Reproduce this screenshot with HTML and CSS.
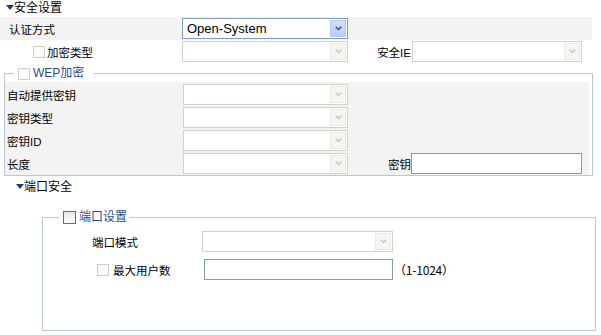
FILE: index.html
```html
<!DOCTYPE html>
<html lang="zh-CN">

<head>
    <meta charset="UTF-8">
    <title>安全设置</title>
    <link rel="stylesheet" href="styles.css">
</head>

<body>

    <!-- 安全设置 -->
    <div class="head"><span class="tri"></span>安全设置</div>

    <div class="row shade">
        <label class="lab lab-top">认证方式</label>
        <div class="sel on w166">
            <span class="val">Open-System</span>
            <span class="btn"><svg width="7" height="5" viewBox="0 0 7 5"><polyline points="0.8,0.8 3.5,3.6 6.2,0.8" /></svg></span>
        </div>
    </div>

    <div class="row">
        <label class="lab lab-cb"><span class="cb"></span>加密类型</label>
        <div class="sel w166">
            <span class="btn"><svg width="7" height="5" viewBox="0 0 7 5"><polyline points="0.8,0.8 3.5,3.6 6.2,0.8" /></svg></span>
        </div>
        <label class="lab-r">安全IE</label>
        <div class="sel w170 gap1">
            <span class="btn"><svg width="7" height="5" viewBox="0 0 7 5"><polyline points="0.8,0.8 3.5,3.6 6.2,0.8" /></svg></span>
        </div>
    </div>

    <fieldset class="wep">
        <legend><span class="cb"></span>WEP加密</legend>
        <div class="wep-body">
            <div class="row">
                <label class="lab lab-in">自动提供密钥</label>
                <div class="sel w165">
                    <span class="btn"><svg width="7" height="5" viewBox="0 0 7 5"><polyline points="0.8,0.8 3.5,3.6 6.2,0.8" /></svg></span>
                </div>
            </div>
            <div class="row">
                <label class="lab lab-in">密钥类型</label>
                <div class="sel w165">
                    <span class="btn"><svg width="7" height="5" viewBox="0 0 7 5"><polyline points="0.8,0.8 3.5,3.6 6.2,0.8" /></svg></span>
                </div>
            </div>
            <div class="row">
                <label class="lab lab-in">密钥ID</label>
                <div class="sel w165">
                    <span class="btn"><svg width="7" height="5" viewBox="0 0 7 5"><polyline points="0.8,0.8 3.5,3.6 6.2,0.8" /></svg></span>
                </div>
            </div>
            <div class="row">
                <label class="lab lab-in">长度</label>
                <div class="sel w165">
                    <span class="btn"><svg width="7" height="5" viewBox="0 0 7 5"><polyline points="0.8,0.8 3.5,3.6 6.2,0.8" /></svg></span>
                </div>
                <label class="lab-r">密钥</label>
                <input type="text" class="txt w171">
            </div>
        </div>
    </fieldset>

    <!-- 端口安全 -->
    <div class="head head2"><span class="tri"></span>端口安全</div>

    <fieldset class="port">
        <legend><span class="cb cb-on"></span>端口设置</legend>
        <div class="row row-port">
            <label class="lab lab-mode">端口模式</label>
            <div class="sel w191">
                <span class="btn"><svg width="7" height="5" viewBox="0 0 7 5"><polyline points="0.8,0.8 3.5,3.6 6.2,0.8" /></svg></span>
            </div>
        </div>
        <div class="row row-port">
            <label class="lab lab-max"><span class="cb"></span>最大用户数</label>
            <input type="text" class="txt w189">
            <span class="range">（1-1024）</span>
        </div>
    </fieldset>

</body>

</html>
```

FILE: styles.css
```css
* {
    margin: 0;
    padding: 0;
    box-sizing: border-box;
}

body {
    font-family: "Liberation Sans", "Noto Sans CJK SC", sans-serif;
    font-size: 11.5px;
    color: #000;
    background: #fff;
    width: 601px;
}

.head {
    height: 17px;
    line-height: 17px;
    padding-left: 6px;
    display: flex;
    align-items: center;
    font-size: 12px;
}

.head2 {
    height: 21px;
    padding-left: 16px;
    margin-top: 1px;
}

.tri {
    width: 0;
    height: 0;
    border-left: 4px solid transparent;
    border-right: 4px solid transparent;
    border-top: 5px solid #1d3a78;
    margin-top: -2px;
}

.row {
    height: 23px;
    display: flex;
    align-items: center;
}

.shade {
    background: #f3f3f3;
    width: 592px;
}

.lab {
    display: flex;
    align-items: center;
    height: 100%;
}

.lab-top {
    width: 182px;
    padding-left: 9px;
}

.lab-cb {
    width: 182px;
    padding-left: 33px;
}

.lab-in {
    width: 178px;
    padding-left: 2px;
}

.lab-r {
    width: 63px;
    text-align: right;
}

.cb {
    display: inline-block;
    width: 12px;
    height: 12px;
    border: 1px solid #cfcdc4;
    background: #fbfbfa;
    margin-right: 2px;
}

.cb-on {
    width: 13px;
    height: 13px;
    border-color: #52709f;
    background: linear-gradient(#e6e6e0, #fff);
    margin-right: 3px;
}

/* fake select boxes */
.sel {
    height: 21px;
    border: 1px solid #d3d1c6;
    background: #fff;
    display: flex;
    align-items: center;
    justify-content: space-between;
    padding: 1px;
}

.sel .btn {
    margin-left: auto;
    width: 16px;
    height: 17px;
    background: #f6f5f0;
    border: 1px solid #ebe9e0;
    display: flex;
    align-items: center;
    justify-content: center;
}

.sel .btn polyline {
    fill: none;
    stroke: #c6c4ba;
    stroke-width: 1.4;
}

.sel.on {
    border-color: #7f9db9;
}

.sel.on .btn {
    background: linear-gradient(#d2defa, #b9cdf6);
    border-color: #b4c7f1;
}

.sel.on .btn polyline {
    stroke: #4c5f86;
    stroke-width: 1.7;
}

.val {
    font-size: 13px;
    padding-left: 3px;
}

.w166 { width: 166px; }
.w165 { width: 165px; }
.w170 { width: 170px; }
.w191 { width: 191px; }
.gap1 { margin-left: 1px; }

.txt {
    height: 21px;
    border: 1px solid #7f9db9;
    background: #fff;
    outline: none;
}

.w171 { width: 171px; }
.w189 { width: 189px; }

/* WEP box */
.wep {
    margin: 4px 0 0 4px;
    width: 589px;
    border: 1px solid #b8c7da;
    padding: 2px 3px 0 0;
}

.wep legend,
.port legend {
    display: flex;
    align-items: center;
    height: 13px;
    line-height: 13px;
    color: #2c4c8c;
    font-size: 12px;
}

.wep legend {
    margin-left: 9px;
    padding: 0 10px 0 4px;
}

.wep legend .cb {
    margin-right: 3px;
}

.wep-body {
    background: #f3f3f3;
    padding-top: 1px;
}

/* port box */
.port {
    margin: 13px 0 0 42px;
    width: 554px;
    border: 1px solid #b8c7da;
    padding: 6px 0 49px 0;
}

.port legend {
    margin-left: 16px;
    padding: 0 2px 0 4px;
}

.row-port + .row-port {
    margin-top: 5px;
}

.lab-mode {
    width: 159px;
    padding-left: 49px;
}

.lab-max {
    width: 161px;
    padding-left: 54px;
}

.lab-max .cb {
    margin-right: 4px;
}

.range {
    margin-left: 1px;
    font-size: 12px;
    font-family: "Noto Sans CJK SC", sans-serif;
    letter-spacing: -0.2px;
}
```
